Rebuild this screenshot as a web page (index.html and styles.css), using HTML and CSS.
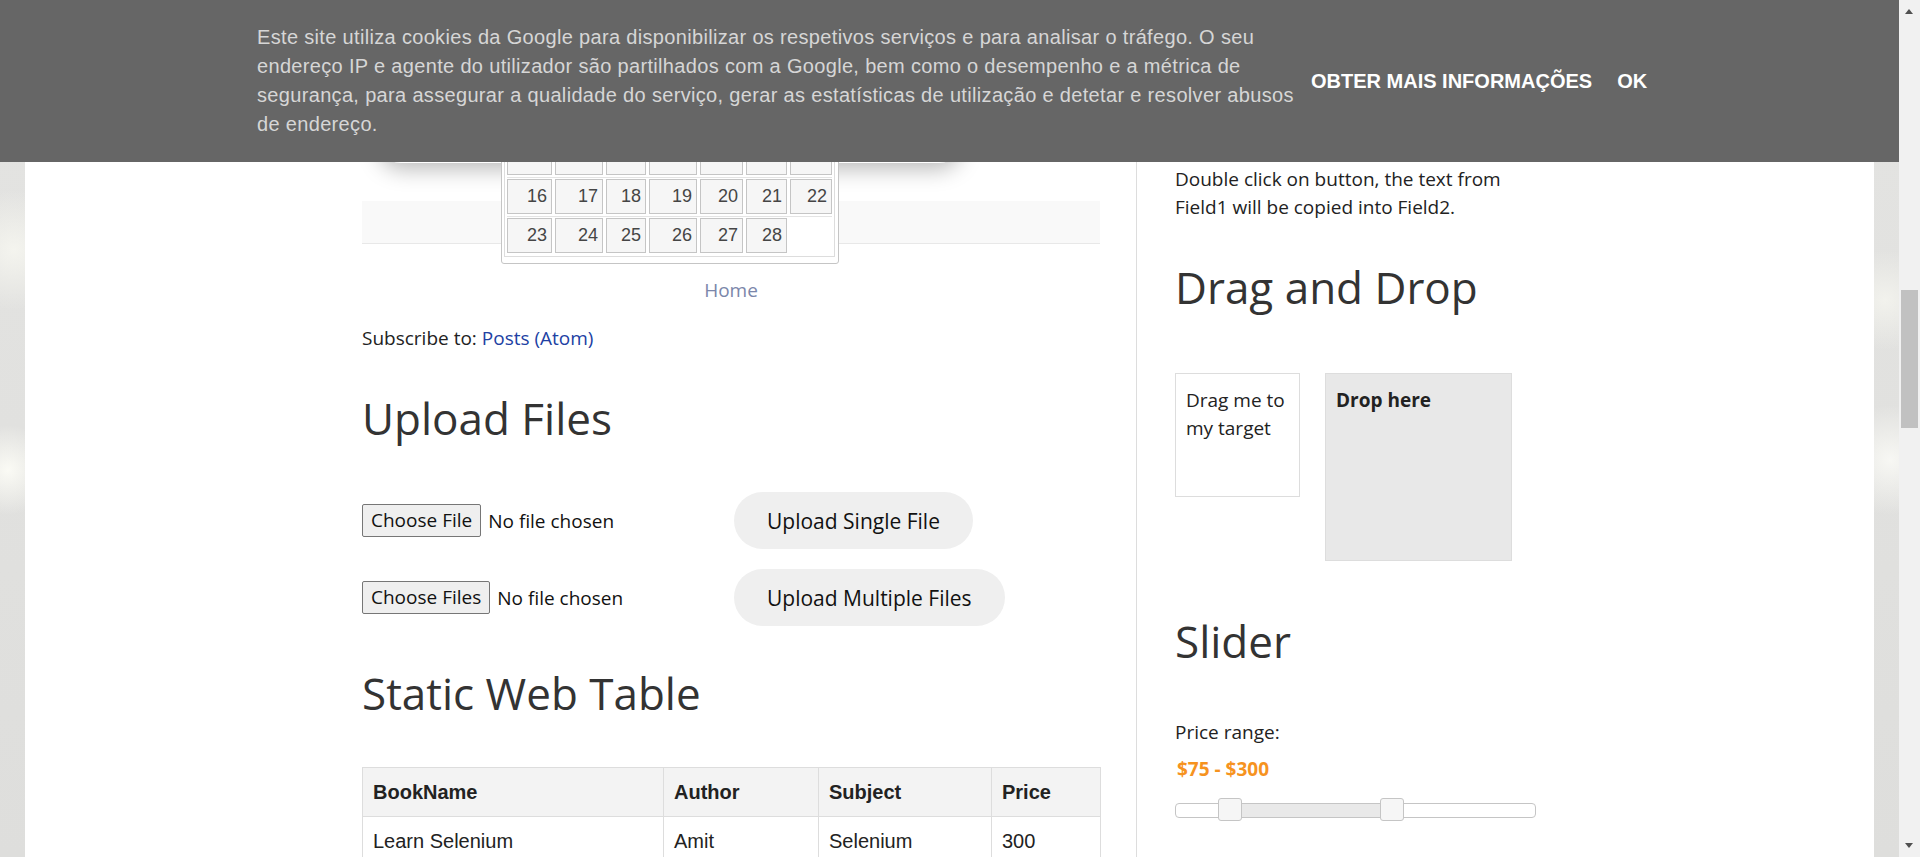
FILE: index.html
```html
<!DOCTYPE html>
<html lang="pt">
<head>
<meta charset="utf-8">
<title>Automation Testing Practice</title>
<link rel="stylesheet" href="styles.css">
</head>
<body>
<div class="page">
  <main class="main">
    <div class="post-shadow"></div>
    <div class="pager"></div>
    <div class="home"><a href="#">Home</a></div>
    <div class="subscribe">Subscribe to: <a href="#">Posts (Atom)</a></div>

    <h2 class="h-upload">Upload Files</h2>
    <div class="upload-row row-first">
      <div class="file"><span class="file-btn">Choose File</span><span class="file-status">No file chosen</span></div>
      <button class="pill">Upload Single File</button>
    </div>
    <div class="upload-row row-second">
      <div class="file"><span class="file-btn">Choose Files</span><span class="file-status">No file chosen</span></div>
      <button class="pill">Upload Multiple Files</button>
    </div>

    <h2 class="h-table">Static Web Table</h2>
    <table class="books">
      <colgroup><col class="c-book"><col class="c-author"><col class="c-subject"><col class="c-price"></colgroup>
      <tr><th>BookName</th><th>Author</th><th>Subject</th><th>Price</th></tr>
      <tr><td>Learn Selenium</td><td>Amit</td><td>Selenium</td><td>300</td></tr>
      <tr><td>Learn Java</td><td>Mukesh</td><td>Java</td><td>500</td></tr>
    </table>
  </main>

  <aside class="side">
    <p class="desc">Double click on button, the text from Field1 will be copied into Field2.</p>
    <h2 class="h-dnd">Drag and Drop</h2>
    <div class="dnd">
      <div class="drag">Drag me to my target</div>
      <div class="drop">Drop here</div>
    </div>
    <h2 class="h-slider">Slider</h2>
    <p class="price">Price range:</p>
    <p class="amount">$75 - $300</p>
    <div class="slider">
      <div class="range"></div>
      <span class="handle h1"></span>
      <span class="handle h2"></span>
    </div>
  </aside>

  <div class="dp">
    <div class="dp-frame">
      <div class="dp-row dp-row-top">
        <span class="dp-cell">9</span><span class="dp-cell">10</span><span class="dp-cell">11</span><span class="dp-cell">12</span><span class="dp-cell">13</span><span class="dp-cell">14</span><span class="dp-cell">15</span>
      </div>
      <div class="dp-row">
        <span class="dp-cell">16</span><span class="dp-cell">17</span><span class="dp-cell">18</span><span class="dp-cell">19</span><span class="dp-cell">20</span><span class="dp-cell">21</span><span class="dp-cell">22</span>
      </div>
      <div class="dp-row">
        <span class="dp-cell">23</span><span class="dp-cell">24</span><span class="dp-cell">25</span><span class="dp-cell">26</span><span class="dp-cell">27</span><span class="dp-cell">28</span><span class="dp-empty"></span>
      </div>
    </div>
  </div>
</div>

<div class="cookie">
  <div class="cookie-text">Este site utiliza cookies da Google para disponibilizar os respetivos serviços e para analisar o tráfego. O seu endereço IP e agente do utilizador são partilhados com a Google, bem como o desempenho e a métrica de segurança, para assegurar a qualidade do serviço, gerar as estatísticas de utilização e detetar e resolver abusos de endereço.</div>
  <div class="cookie-actions"><a href="#">OBTER MAIS INFORMAÇÕES</a><a href="#">OK</a></div>
</div>

<div class="scrollbar">
  <span class="arrow-up"></span>
  <span class="thumb"></span>
  <span class="arrow-down"></span>
</div>
</body>
</html>
```

FILE: styles.css
```css
html, body {
  margin: 0;
  height: 857px;
  overflow: hidden;
}

body {
  font-family: "Open Sans", "Liberation Sans", sans-serif;
  color: #222;
  background:
    radial-gradient(circle at 8px 470px, rgba(252, 252, 246, 0.95) 0, rgba(252, 252, 246, 0) 45px),
    radial-gradient(circle at 14px 250px, rgba(246, 246, 240, 0.9) 0, rgba(246, 246, 240, 0) 60px),
    radial-gradient(circle at 1890px 460px, rgba(250, 250, 246, 0.9) 0, rgba(250, 250, 246, 0) 55px),
    radial-gradient(circle at 1885px 300px, rgba(246, 246, 240, 0.8) 0, rgba(246, 246, 240, 0) 50px),
    linear-gradient(#e4e4e2, #dededc);
}

a { text-decoration: none; }

.page {
  position: relative;
  margin-left: 25px;
  width: 1849px;
  min-height: 900px;
  background: #fff;
  display: flex;
}

.main {
  flex: none;
  margin-left: 337px;
  width: 738px;
}

h2 {
  margin: 0;
  font-family: "Open Sans", sans-serif;
  font-weight: 400;
  font-size: 44px;
  line-height: 53px;
  color: #333;
}

.post-shadow {
  height: 163px;
  margin: 0 135px 0 13px;
  background: #fff;
  border-radius: 0 0 26px 26px;
  box-shadow: 0 10px 22px -4px rgba(0, 0, 0, 0.28);
}

.pager {
  margin-top: 38px;
  height: 42px;
  background: #f9f9f9;
  border-bottom: 1px solid #e8e8e8;
}

.home {
  margin-top: 32px;
  text-align: center;
  font-size: 19px;
  line-height: 28px;
}
.home a { color: #7b86aa; }

.subscribe {
  margin-top: 20px;
  font-size: 19px;
  line-height: 28px;
  color: #222;
}
.subscribe a { color: #2141a3; }

.h-upload { margin-top: 40px; }

.upload-row {
  display: flex;
  align-items: center;
  height: 57px;
}
.row-first { margin-top: 47px; }
.row-second { margin-top: 20px; }

.file {
  flex: none;
  width: 372px;
  display: flex;
  align-items: center;
}

.file-btn {
  height: 33px;
  padding: 0 8px;
  box-sizing: border-box;
  border: 1px solid #767676;
  border-radius: 2px;
  background: #efefef;
  color: #111;
  font-size: 19px;
  line-height: 31px;
}

.file-status {
  margin-left: 7px;
  font-size: 19px;
  color: #111;
}

.pill {
  height: 57px;
  padding: 0 33px;
  border: 0;
  border-radius: 29px;
  background: #efefef;
  font-family: "Open Sans", sans-serif;
  font-size: 21px;
  color: #111;
}

.h-table { margin-top: 41px; }

.books {
  margin-top: 47px;
  width: 738px;
  table-layout: fixed;
  border-collapse: collapse;
  font-family: "Liberation Sans", Arial, sans-serif;
  font-size: 20px;
  color: #222;
}
.c-book { width: 301px; }
.c-author { width: 155px; }
.c-subject { width: 173px; }
.c-price { width: 109px; }

.books th,
.books td {
  border: 1px solid #ddd;
  padding: 12px 10px;
  line-height: 24px;
  text-align: left;
}
.books th {
  background: #f3f3f3;
  font-weight: bold;
}

/* sidebar */
.side {
  flex: none;
  margin-left: 36px;
  border-left: 1px solid #ddd;
  padding: 165px 0 0 38px;
  width: 345px;
}

.side p {
  margin: 0;
  font-size: 19px;
  line-height: 28px;
  color: #222;
}

.h-dnd { margin-top: 40px; }

.dnd {
  margin-top: 59px;
  display: flex;
  align-items: flex-start;
  gap: 25px;
}

.drag {
  width: 125px;
  height: 124px;
  box-sizing: border-box;
  border: 1px solid #ddd;
  padding: 12px 10px;
  font-size: 19px;
  line-height: 28px;
}

.drop {
  width: 187px;
  height: 188px;
  box-sizing: border-box;
  border: 1px solid #ddd;
  background: #e8e8e8;
  padding: 12px 10px;
  font-size: 19px;
  line-height: 28px;
  font-weight: bold;
  color: #222;
}

.h-slider { margin-top: 54px; }

.side .price { margin-top: 50px; }

.side .amount {
  margin-top: 9px;
  padding-left: 2px;
  font-weight: bold;
  color: #f6931f;
}

.slider {
  position: relative;
  margin-top: 20px;
  width: 361px;
  height: 15px;
  box-sizing: border-box;
  border: 1px solid #c5c5c5;
  border-radius: 4px;
  background: #fff;
}

.range {
  position: absolute;
  top: 0;
  bottom: 0;
  left: 54px;
  width: 162px;
  background: #e9e9e9;
}

.handle {
  position: absolute;
  top: -6px;
  width: 24px;
  height: 23px;
  box-sizing: border-box;
  border: 1px solid #c5c5c5;
  border-radius: 3px;
  background: #f6f6f6;
}
.h1 { left: 42px; }
.h2 { left: 204px; }

/* datepicker popup */
.dp {
  position: absolute;
  left: 476px;
  top: 134px;
  z-index: 5;
  padding: 3px 3px 6px 2px;
  border: 1px solid #c5c5c5;
  border-radius: 3px;
  background: #fff;
}

.dp-frame {
  border: 1px solid #dddddd;
  padding: 0 2px 1px 2px;
}

.dp-row {
  display: grid;
  grid-template-columns: 45px 48px 40px 48px 43px 41px 42px;
  column-gap: 3px;
  padding: 1px 0 2px;
  border-bottom: 1px solid #e4e4e4;
}
.dp-row:last-child { border-bottom: 0; }

.dp-cell {
  height: 35px;
  box-sizing: border-box;
  border: 1px solid #c5c5c5;
  background: #f6f6f6;
  color: #454545;
  font-family: "Liberation Sans", Arial, sans-serif;
  font-size: 18px;
  line-height: 33px;
  text-align: right;
  padding-right: 4px;
}

.dp-row-top .dp-cell { line-height: 24px; }

/* cookie bar */
.cookie {
  position: fixed;
  top: 0;
  left: 0;
  width: 1899px;
  height: 162px;
  z-index: 10;
  background: #666;
  display: flex;
  align-items: center;
  font-family: "Liberation Sans", Arial, sans-serif;
}

.cookie-text {
  flex: none;
  margin-left: 257px;
  width: 1050px;
  font-size: 20px;
  letter-spacing: 0.33px;
  line-height: 29px;
  color: #d6d6d6;
}

.cookie-actions {
  margin-left: 4px;
  display: flex;
  gap: 25px;
  font-size: 20px;
  font-weight: bold;
}
.cookie-actions a { color: #fff; }

/* fake scrollbar */
.scrollbar {
  position: fixed;
  top: 0;
  right: 0;
  width: 21px;
  height: 857px;
  z-index: 11;
  background: #f1f1f1;
}

.thumb {
  position: absolute;
  left: 2px;
  top: 290px;
  width: 17px;
  height: 138px;
  background: #c1c1c1;
}

.arrow-up,
.arrow-down {
  position: absolute;
  left: 6px;
  width: 0;
  height: 0;
  border-left: 4px solid transparent;
  border-right: 4px solid transparent;
}
.arrow-up {
  top: 9px;
  border-bottom: 5px solid #505050;
}
.arrow-down {
  bottom: 9px;
  border-top: 5px solid #505050;
}
```
